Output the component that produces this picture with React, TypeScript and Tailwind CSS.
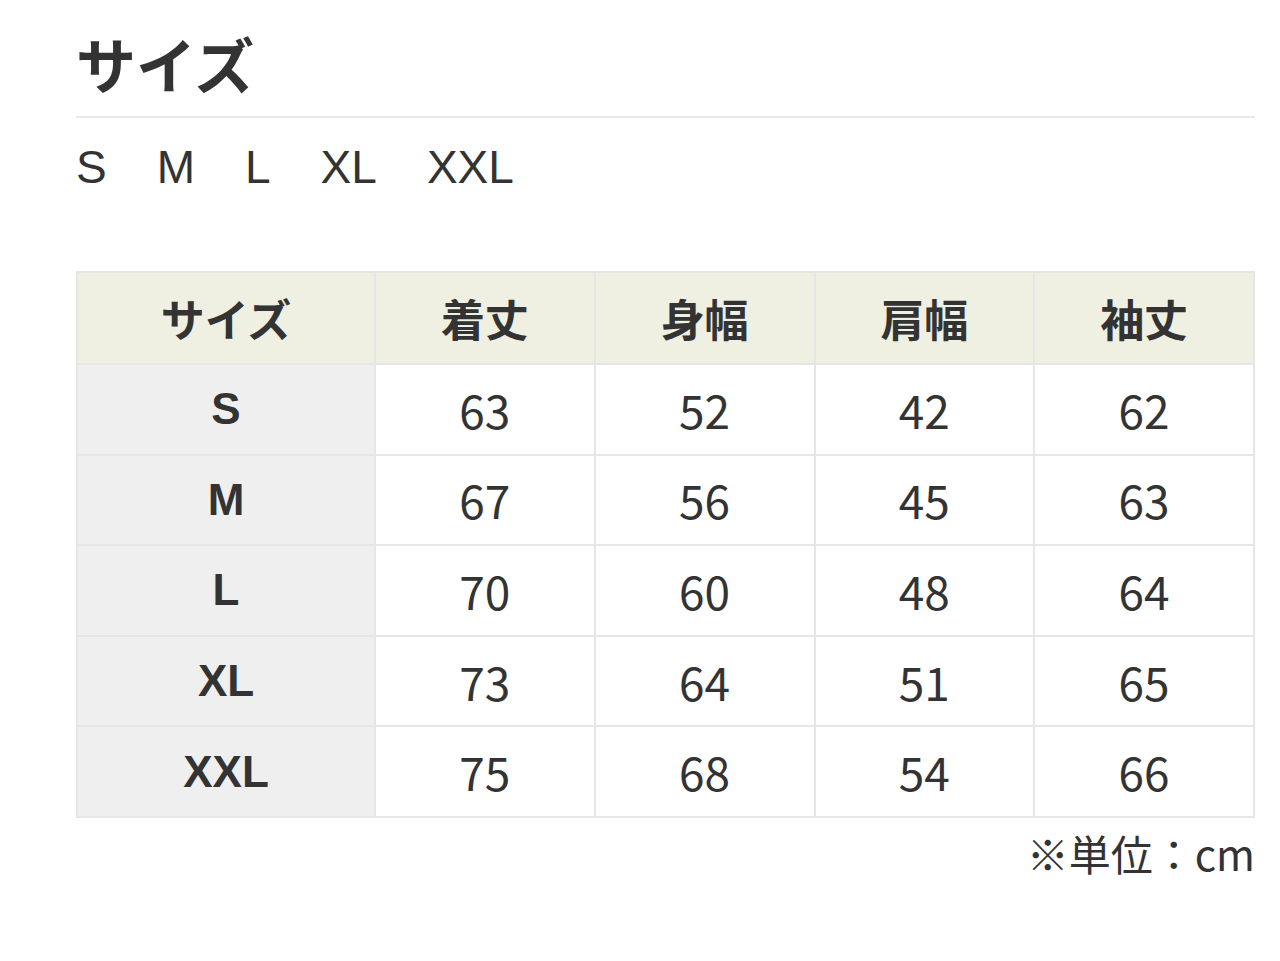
import React from 'react';

const font = { fontFamily: '"Noto Sans CJK JP", "Noto Sans", sans-serif' };
const latin = { fontFamily: '"Liberation Sans", "Noto Sans CJK JP", sans-serif' };

const rows = [
  ['S', '63', '52', '42', '62'],
  ['M', '67', '56', '45', '63'],
  ['L', '70', '60', '48', '64'],
  ['XL', '73', '64', '51', '65'],
  ['XXL', '75', '68', '54', '66'],
];

const heads = ['サイズ', '着丈', '身幅', '肩幅', '袖丈'];

export default function App() {
  return (
    <div className="min-h-screen bg-white text-[#333333] pl-[76px] pr-[25px] pt-[18px]" style={font}>
      {/* 見出し */}
      <h2 className="text-[60px] font-bold leading-[90px] pb-[8px] border-b-2 border-[#e8e8e8]">サイズ</h2>
      <div className="flex gap-[50px] text-[46px] leading-[68px] mt-[15px]" style={latin}>
        <span>S</span>
        <span>M</span>
        <span>L</span>
        <span>XL</span>
        <span>XXL</span>
      </div>

      {/* サイズ表 */}
      <table className="w-full mt-[70px] border-collapse border-2 border-[#e6e6e6] text-center text-[46px]">
        <thead>
          <tr className="h-[92px] bg-[#efefe2]">
            {heads.map((h, i) => (
              <th
                key={h}
                className={`border-2 border-[#e6e6e6] font-bold text-[44px] ${i === 0 ? 'w-[298px]' : ''}`}
              >
                {h}
              </th>
            ))}
          </tr>
        </thead>
        <tbody>
          {rows.map((r) => (
            <tr key={r[0]} className="h-[90.6px]">
              <td className="border-2 border-[#e6e6e6] bg-[#efefef] font-bold text-[44px]" style={latin}>
                {r[0]}
              </td>
              {r.slice(1).map((v, i) => (
                <td key={i} className="border-2 border-[#e6e6e6] bg-white">
                  {v}
                </td>
              ))}
            </tr>
          ))}
        </tbody>
      </table>
      <p className="text-right text-[42px] leading-[70px]">※単位：cm</p>
    </div>
  );
}
